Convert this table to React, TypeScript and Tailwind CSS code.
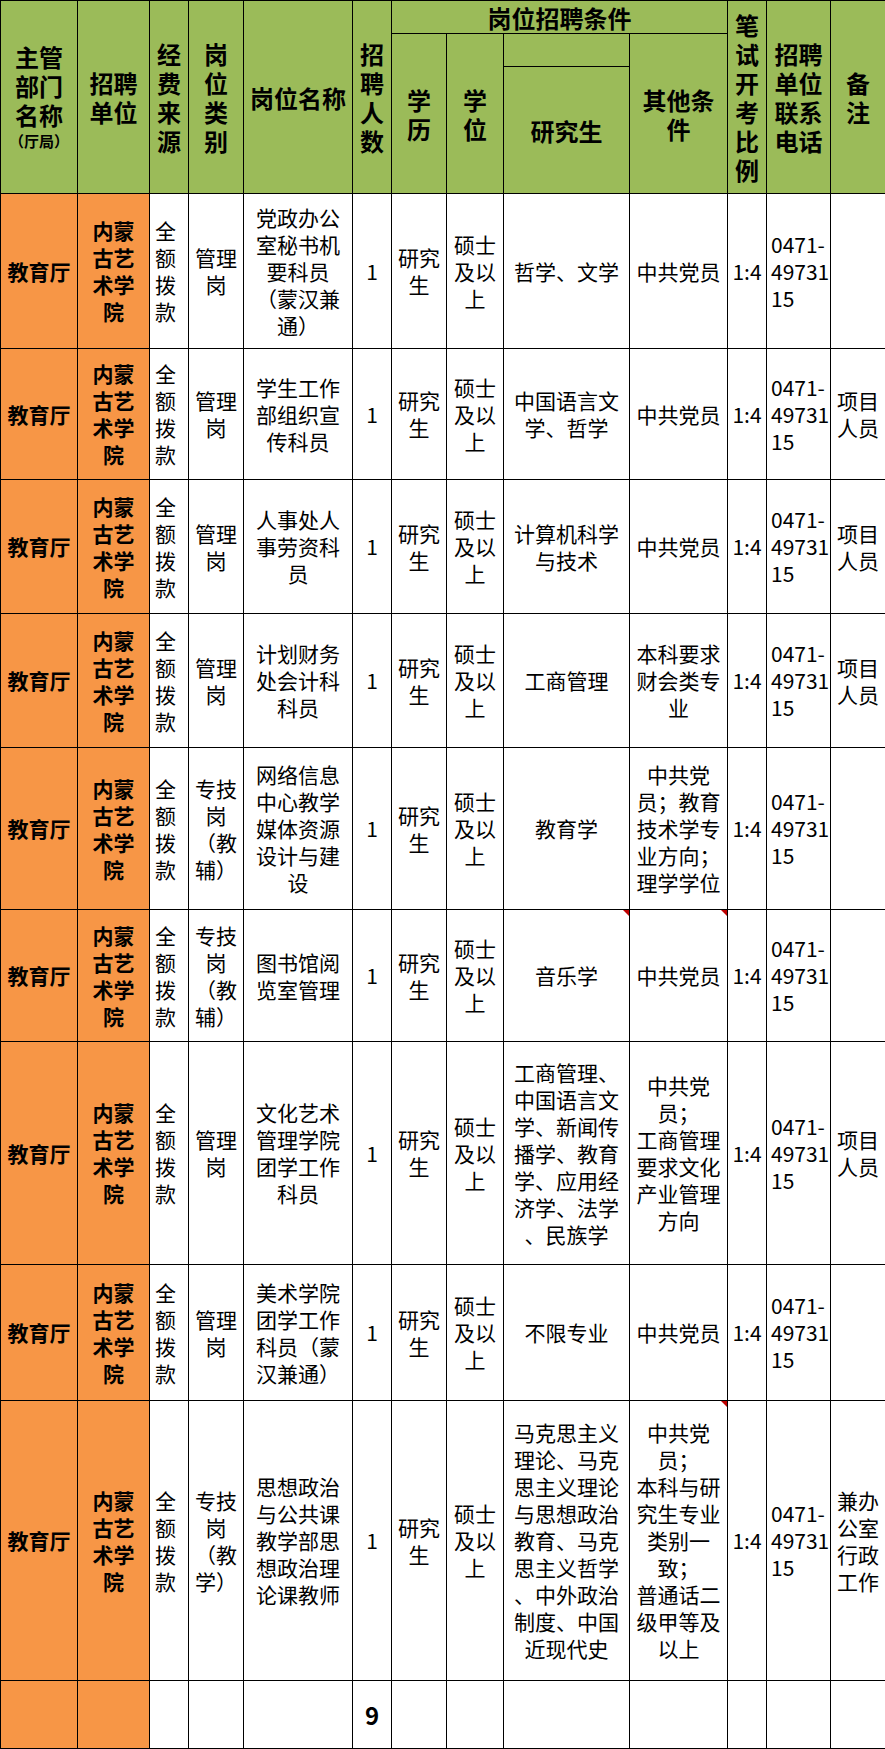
import React from "react";

const COLS = [77, 72, 39, 55, 109, 39, 55, 57, 126, 98, 39, 64, 55];

const GREEN = "bg-[#9bbb59]";
const ORANGE = "bg-[#f79646]";

type Row = {
    h: number;
    job: string[];
    cat: string[];
    major: string[];
    other: string[];
    note?: string[];
    markMajor?: boolean;
    markOther?: boolean;
};

const MGMT = ["管理", "岗"];
const TECH_AID = ["专技", "岗", "（教", "辅）"];
const TECH_TEACH = ["专技", "岗", "（教", "学）"];
const PROJ = ["项目", "人员"];

const rows: Row[] = [
    { h: 155, job: ["党政办公", "室秘书机", "要科员", "（蒙汉兼", "通）"], cat: MGMT, major: ["哲学、文学"], other: ["中共党员"] },
    { h: 131, job: ["学生工作", "部组织宣", "传科员"], cat: MGMT, major: ["中国语言文", "学、哲学"], other: ["中共党员"], note: PROJ },
    { h: 134, job: ["人事处人", "事劳资科", "员"], cat: MGMT, major: ["计算机科学", "与技术"], other: ["中共党员"], note: PROJ },
    { h: 134, job: ["计划财务", "处会计科", "科员"], cat: MGMT, major: ["工商管理"], other: ["本科要求", "财会类专", "业"], note: PROJ },
    {
        h: 162,
        job: ["网络信息", "中心教学", "媒体资源", "设计与建", "设"],
        cat: TECH_AID,
        major: ["教育学"],
        other: ["中共党", "员；教育", "技术学专", "业方向；", "理学学位"],
    },
    { h: 132, job: ["图书馆阅", "览室管理"], cat: TECH_AID, major: ["音乐学"], other: ["中共党员"], markMajor: true, markOther: true },
    {
        h: 223,
        job: ["文化艺术", "管理学院", "团学工作", "科员"],
        cat: MGMT,
        major: ["工商管理、", "中国语言文", "学、新闻传", "播学、教育", "学、应用经", "济学、法学", "、民族学"],
        other: ["中共党", "员；", "工商管理", "要求文化", "产业管理", "方向"],
        note: PROJ,
    },
    { h: 136, job: ["美术学院", "团学工作", "科员（蒙", "汉兼通）"], cat: MGMT, major: ["不限专业"], other: ["中共党员"] },
    {
        h: 280,
        job: ["思想政治", "与公共课", "教学部思", "想政治理", "论课教师"],
        cat: TECH_TEACH,
        major: ["马克思主义", "理论、马克", "思主义理论", "与思想政治", "教育、马克", "思主义哲学", "、中外政治", "制度、中国", "近现代史"],
        other: ["中共党", "员；", "本科与研", "究生专业", "类别一", "致；", "普通话二", "级甲等及", "以上"],
        note: ["兼办", "公室", "行政", "工作"],
        markOther: true,
    },
];

function Lines({ lines }: { lines: string[] }) {
    return (
        <>
            {lines.map((l, i) => (
                <div key={i} className="whitespace-nowrap">
                    {l}
                </div>
            ))}
        </>
    );
}

function Mark() {
    return <span className="absolute right-0 top-0 h-0 w-0 border-l-[6px] border-t-[6px] border-l-transparent border-t-[#c00000]" />;
}

const th = `border border-black p-0 text-center align-middle font-bold text-[24px] leading-[29px] text-black ${GREEN}`;
const td = "border border-black p-0 align-middle text-[21px] leading-[27px] text-black";

export default function App() {
    return (
        <div className="w-[885px] bg-white font-['Noto_Sans_CJK_SC',sans-serif]">
            <table className="w-[885px] table-fixed border-collapse border-t border-t-[#c8c8c8]">
                <colgroup>
                    {COLS.map((w, i) => (
                        <col key={i} style={{ width: w }} />
                    ))}
                </colgroup>
                <thead>
                    <tr className="h-[33px]">
                        <th rowSpan={3} className={th}>
                            <Lines lines={["主管", "部门", "名称"]} />
                            <div className="text-[15px] leading-[24px]">（厅局）</div>
                        </th>
                        <th rowSpan={3} className={th}>
                            <Lines lines={["招聘", "单位"]} />
                        </th>
                        <th rowSpan={3} className={th}>
                            <Lines lines={["经", "费", "来", "源"]} />
                        </th>
                        <th rowSpan={3} className={th}>
                            <Lines lines={["岗", "位", "类", "别"]} />
                        </th>
                        <th rowSpan={3} className={th}>
                            岗位名称
                        </th>
                        <th rowSpan={3} className={th}>
                            <Lines lines={["招", "聘", "人", "数"]} />
                        </th>
                        <th colSpan={4} className={th}>
                            岗位招聘条件
                        </th>
                        <th rowSpan={3} className={th}>
                            <Lines lines={["笔", "试", "开", "考", "比", "例"]} />
                        </th>
                        <th rowSpan={3} className={th}>
                            <Lines lines={["招聘", "单位", "联系", "电话"]} />
                        </th>
                        <th rowSpan={3} className={th}>
                            <Lines lines={["备", "注"]} />
                        </th>
                    </tr>
                    <tr className="h-[33px]">
                        <th rowSpan={2} className={th}>
                            <Lines lines={["学", "历"]} />
                        </th>
                        <th rowSpan={2} className={th}>
                            <Lines lines={["学", "位"]} />
                        </th>
                        <th className={th}></th>
                        <th rowSpan={2} className={th}>
                            <Lines lines={["其他条", "件"]} />
                        </th>
                    </tr>
                    <tr className="h-[127px]">
                        <th className={th}>研究生</th>
                    </tr>
                </thead>
                <tbody>
                    {rows.map((r, i) => (
                        <tr key={i} style={{ height: r.h }}>
                            <td className={`${td} ${ORANGE} text-center font-bold`}>教育厅</td>
                            <td className={`${td} ${ORANGE} text-center font-bold`}>
                                <Lines lines={["内蒙", "古艺", "术学", "院"]} />
                            </td>
                            <td className={`${td} pl-[5px] text-left`}>
                                <Lines lines={["全", "额", "拨", "款"]} />
                            </td>
                            <td className={`${td} text-center`}>
                                <Lines lines={r.cat} />
                            </td>
                            <td className={`${td} text-center`}>
                                <Lines lines={r.job} />
                            </td>
                            <td className={`${td} text-center`}>1</td>
                            <td className={`${td} text-center`}>
                                <Lines lines={["研究", "生"]} />
                            </td>
                            <td className={`${td} text-center`}>
                                <Lines lines={["硕士", "及以", "上"]} />
                            </td>
                            <td className={`${td} relative text-center`}>
                                <Lines lines={r.major} />
                                {r.markMajor && <Mark />}
                            </td>
                            <td className={`${td} relative text-center`}>
                                <Lines lines={r.other} />
                                {r.markOther && <Mark />}
                            </td>
                            <td className={`${td} text-center text-[20px]`}>1:4</td>
                            <td className={`${td} pl-[4px] text-left text-[20px]`}>
                                <Lines lines={["0471-", "49731", "15"]} />
                            </td>
                            <td className={`${td} pl-[6px] text-left`}>{r.note && <Lines lines={r.note} />}</td>
                        </tr>
                    ))}
                    <tr className="h-[68px]">
                        <td className={`${td} ${ORANGE}`}></td>
                        <td className={`${td} ${ORANGE}`}></td>
                        <td className={td}></td>
                        <td className={td}></td>
                        <td className={td}></td>
                        <td className={`${td} text-center text-[24px] font-bold`}>9</td>
                        <td className={td}></td>
                        <td className={td}></td>
                        <td className={td}></td>
                        <td className={td}></td>
                        <td className={td}></td>
                        <td className={td}></td>
                        <td className={td}></td>
                    </tr>
                </tbody>
            </table>
        </div>
    );
}
